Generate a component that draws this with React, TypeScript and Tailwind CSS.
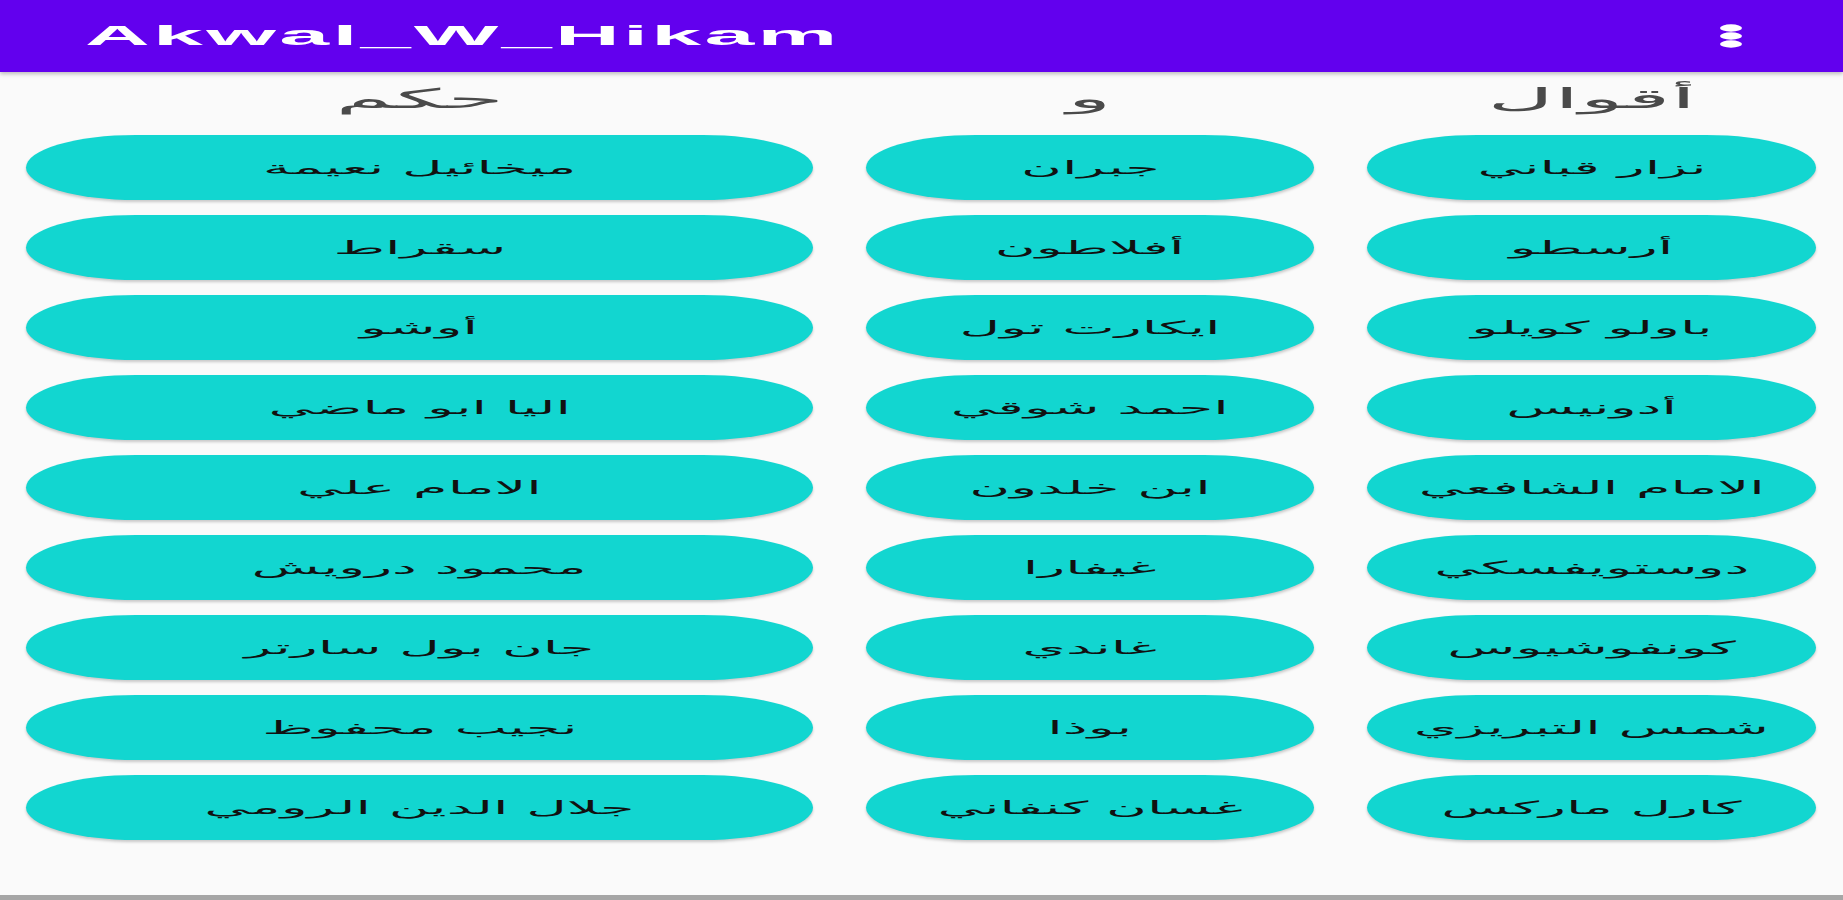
import React from "react";

const right = ["نزار قباني", "أرسطو", "باولو كويلو", "أدونيس", "الامام الشافعي", "دوستويفسكي", "كونفوشيوس", "شمس التبريزي", "كارل ماركس"];
const middle = ["جبران", "أفلاطون", "ايكارت تول", "احمد شوقي", "ابن خلدون", "غيفارا", "غاندي", "بوذا", "غسان كنفاني"];
const left = ["ميخائيل نعيمة", "سقراط", "أوشو", "اليا ابو ماضي", "الامام علي", "محمود درويش", "جان بول سارتر", "نجيب محفوظ", "جلال الدين الرومي"];

function Column({ title, items, width }: { title: string; items: string[]; width: string }) {
  return (
    <div className={`flex flex-col ${width}`}>
      <div className="h-[63px] pb-[10px] flex items-center justify-center">
        <span
          dir="rtl"
          className="inline-block scale-x-[3.4] text-[27px] leading-none text-[#4a4a4a] font-['DejaVu_Sans',sans-serif]"
        >
          {title}
        </span>
      </div>
      <div className="flex flex-col gap-[15px]">
        {items.map((n) => (
          <div
            key={n}
            className="h-[65px] bg-[#12d6d0] rounded-[110px/32.5px] shadow-[0_2px_3px_rgba(0,0,0,0.2)] flex items-center justify-center"
          >
            <span
              dir="rtl"
              className="inline-block scale-x-[3.1] text-[18px] leading-none text-[#111111] font-['DejaVu_Sans',sans-serif]"
            >
              {n}
            </span>
          </div>
        ))}
      </div>
    </div>
  );
}

export default function App() {
  return (
    <div className="w-[1843px] h-[900px] bg-[#fafafa] flex flex-col overflow-hidden">
      <header className="h-[72px] shrink-0 bg-[#6200ee] shadow-[0_2px_4px_rgba(0,0,0,0.25)] flex items-center justify-between pl-[85px] pr-[101px] relative z-10">
        <span className="inline-block origin-left scale-x-[3.32] text-[27px] font-bold tracking-[1px] text-white leading-none font-['Liberation_Sans',Arial,sans-serif]">
          Akwal_W_Hikam
        </span>
        <svg width="22" height="24" viewBox="0 0 22 24">
          <ellipse cx="11" cy="4" rx="11" ry="3.7" fill="#ffffff" />
          <ellipse cx="11" cy="12" rx="11" ry="3.7" fill="#ffffff" />
          <ellipse cx="11" cy="20" rx="11" ry="3.7" fill="#ffffff" />
        </svg>
      </header>
      <main className="flex-1 flex gap-[53px] px-[26px]">
        <Column title="حكم" items={left} width="w-[787px]" />
        <Column title="و" items={middle} width="w-[448px]" />
        <Column title="أقوال" items={right} width="w-[449px]" />
      </main>
      <div className="h-[5px] shrink-0 bg-[#a6a6a6]" />
    </div>
  );
}
